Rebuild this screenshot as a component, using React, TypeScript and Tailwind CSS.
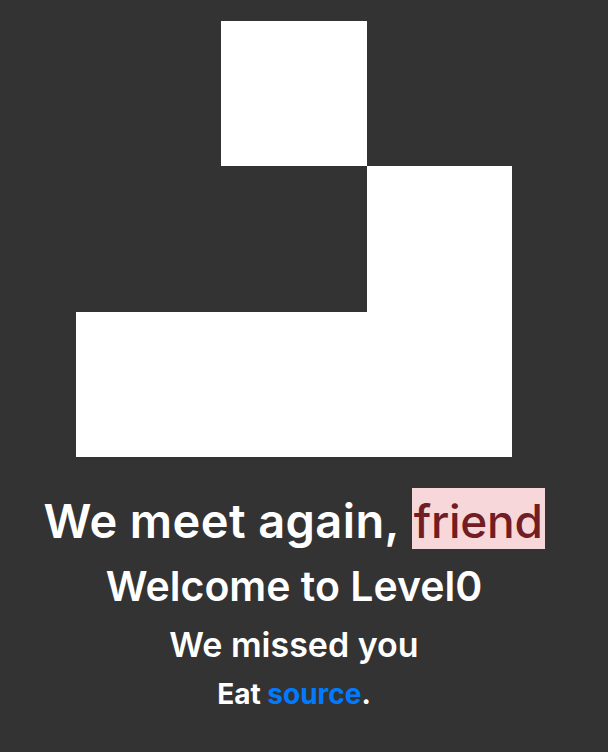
const cells = [0, 1, 0, 0, 0, 1, 1, 1, 1];

export default function App() {
  return (
    <div className="min-h-[752px] bg-[#333333] pt-[21px] text-white" style={{ fontFamily: 'Inter, "Noto Sans", sans-serif' }}>
      <div className="w-[588px] text-center">
        <div className="mx-auto grid h-[436px] w-[436px] grid-cols-3 grid-rows-3">
          {cells.map((on, i) => (
            <div key={i} className={on ? 'bg-white' : ''} />
          ))}
        </div>
        <h1 className="mt-[34px] text-[47px] font-semibold leading-[60px]">
          <span className="tracking-[0.4px]">We meet again,</span>{' '}
          <mark className="bg-[#f8d7da] px-[2px] pt-[5px] pb-0 text-[46px] font-medium tracking-[-0.3px] text-[#721c24]">friend</mark>
        </h1>
        <h2 className="mt-[10px] text-[41px] font-semibold leading-[50px]">Welcome to Level0</h2>
        <h3 className="mt-[12px] text-[34px] font-semibold leading-[44px]">We missed you</h3>
        <h4 className="mt-[10px] text-[28px] font-bold leading-[34px]">
          Eat <a className="text-[#007bff]">source</a>.
        </h4>
      </div>
    </div>
  );
}
